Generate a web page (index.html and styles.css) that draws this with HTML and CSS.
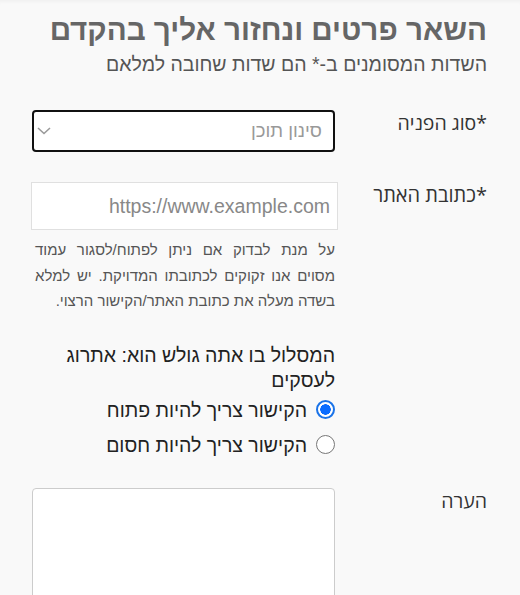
FILE: index.html
```html
<!DOCTYPE html>
<html lang="he" dir="rtl">
<head>
<meta charset="utf-8">
<link rel="stylesheet" href="styles.css">
</head>
<body>
<div class="page">
  <h1 class="title">השאר פרטים ונחזור אליך בהקדם</h1>
  <p class="subtitle">השדות המסומנים ב-* הם שדות שחובה למלאם</p>

  <div class="row row-select">
    <div class="label">*סוג הפניה</div>
    <div class="field">
      <div class="select">
        <span class="select-text">סינון תוכן</span>
        <svg class="chevron" width="14" height="8" viewBox="0 0 14 8"><path d="M1 1 L7 6.5 L13 1" fill="none" stroke="#9a9a9a" stroke-width="1.6"/></svg>
      </div>
    </div>
  </div>

  <div class="row row-url">
    <div class="label">*כתובת האתר</div>
    <div class="field">
      <div class="input"><span class="placeholder">https://www.example.com</span></div>
      <p class="help">על מנת לבדוק אם ניתן לפתוח/לסגור עמוד מסוים אנו זקוקים לכתובתו המדויקת. יש למלא בשדה מעלה את כתובת האתר/הקישור הרצוי.</p>
    </div>
  </div>

  <div class="row row-radio">
    <div class="label"></div>
    <div class="field">
      <p class="route">המסלול בו אתה גולש הוא: אתרוג לעסקים</p>
      <label class="radio"><span class="dot checked"></span>הקישור צריך להיות פתוח</label>
      <label class="radio"><span class="dot"></span>הקישור צריך להיות חסום</label>
    </div>
  </div>

  <div class="row row-note">
    <div class="label">הערה</div>
    <div class="field">
      <div class="textarea"></div>
    </div>
  </div>
</div>
</body>
</html>
```

FILE: styles.css
```css
html, body {
  margin: 0;
  padding: 0;
}
body {
  background: #f9f9f9;
  direction: rtl;
  font-family: "Liberation Sans", Arial, sans-serif;
  height: 595px;
  overflow: hidden;
  box-shadow: inset 0 4px 4px -3px rgba(0,0,0,0.05);
}
.page {
  padding: 12px 33px 0 32px;
}
.title {
  margin: 0;
  font-size: 29.6px;
  line-height: 36px;
  font-weight: bold;
  color: #666;
}
.subtitle {
  margin: 4px 0 0;
  font-size: 19.5px;
  line-height: 24px;
  color: #555;
}
.row {
  display: grid;
  grid-template-columns: 1fr 306px;
}
.label {
  font-family: "Open Sans", "Liberation Sans", sans-serif;
  font-size: 19.5px;
  line-height: 26px;
  color: #333;
}
.row-select {
  margin-top: 34px;
}
.select {
  box-sizing: border-box;
  width: 303px;
  height: 42px;
  margin-right: 3px;
  border: 2px solid #111;
  border-radius: 4px;
  background: #fff;
  display: flex;
  align-items: center;
  justify-content: space-between;
  padding: 0 11px 0 3px;
}
.select-text {
  font-size: 18.5px;
  color: #999;
}
.chevron {
  display: block;
}
.row-url {
  margin-top: 30px;
}
.row-url .label {
  font-size: 20px;
}
.input {
  box-sizing: border-box;
  width: 307px;
  height: 48px;
  border: 1px solid #e0e0e0;
  background: #fff;
  display: flex;
  align-items: center;
  padding: 0 7px;
}
.placeholder {
  direction: ltr;
  font-size: 19.5px;
  color: #888;
}
.help {
  margin: 7px 3px 0 3px;
  font-size: 15px;
  line-height: 25.5px;
  color: #555;
  text-align: justify;
}
.row-radio {
  margin-top: 29px;
}
.route {
  margin: 0 3px 0 0;
  font-size: 19.5px;
  line-height: 25px;
  color: #222;
}
.radio {
  display: flex;
  align-items: center;
  gap: 9px;
  margin-right: 3px;
  font-size: 19.5px;
  line-height: 26px;
  color: #222;
  margin-top: 4px;
}
.radio + .radio {
  margin-top: 9px;
}
.dot {
  box-sizing: border-box;
  width: 19px;
  height: 19px;
  border-radius: 50%;
  border: 1px solid #777;
  background: #fff;
  flex: none;
}
.dot.checked {
  border: 2px solid #1a73e8;
  background: radial-gradient(circle, #0a6cff 0 5px, #fff 5.5px);
}
.row-note {
  margin-top: 30px;
}
.textarea {
  box-sizing: border-box;
  width: 303px;
  height: 140px;
  margin-right: 3px;
  border: 1px solid #ccc;
  border-radius: 4px;
  background: #fff;
}
```
